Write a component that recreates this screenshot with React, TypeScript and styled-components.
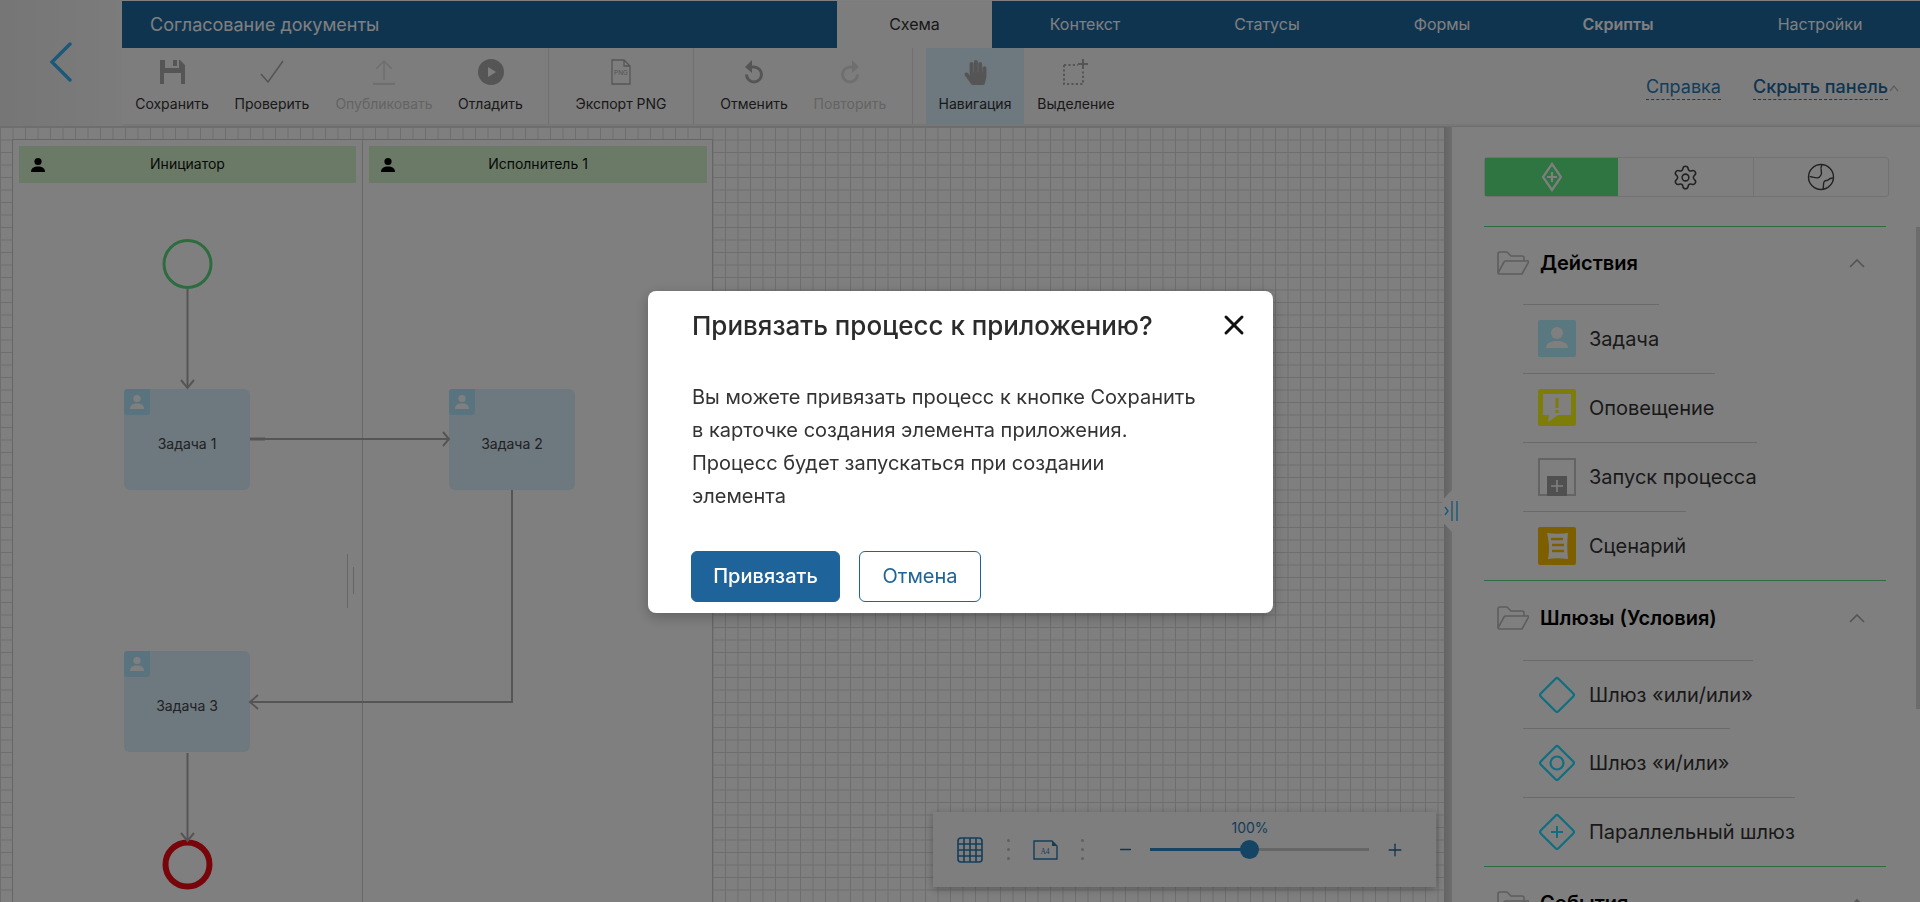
import React from 'react';
import styled, { createGlobalStyle } from 'styled-components';
import { FaHandPaper } from 'react-icons/fa';
import { Settings, X, Plus, Minus } from 'lucide-react';

const Global = createGlobalStyle`
  html, body { margin: 0; padding: 0; height: 100%; overflow: hidden; background: #fff; }
  body { font-family: Inter, "Noto Sans", sans-serif; color: #333; }
  #root { height: 100%; }
  * { box-sizing: border-box; }
`;

const Page = styled.div`
  height: 902px; width: 1920px; display: flex; flex-direction: column; overflow: hidden; position: relative; padding-top: 1px;
`;
const Top = styled.header`display: flex; height: 125px; flex: none;`;
const BackCell = styled.div`
  width: 122px; flex: none; display: flex; align-items: flex-start; justify-content: center; padding-top: 42px; margin-top: -1px;
  background: linear-gradient(90deg, #ececec 0%, #f8f8f8 100%);
`;
const TopMain = styled.div`flex: 1; display: flex; flex-direction: column; min-width: 0;`;
const TitleBar = styled.div`height: 47px; flex: none; display: flex; background: #1e68a0;`;
const ProcessTitle = styled.div`
  width: 715px; padding-left: 28px; line-height: 47px; font-size: 18px; color: #fff; flex: none; white-space: nowrap;
`;
const Tab = styled.div<{ $w: number; $active?: boolean; $bold?: boolean; $ml?: number }>`
  width: ${p => p.$w}px; margin-left: ${p => p.$ml ?? 0}px; flex: none; text-align: center; line-height: 47px; font-size: 16px;
  color: ${p => (p.$active ? '#333' : '#fff')}; background: ${p => (p.$active ? '#fafafa' : 'transparent')};
  font-weight: ${p => (p.$bold ? 600 : 400)};
`;
const Toolbar = styled.div`flex: 1; display: flex; background: #fbfbfb; border-bottom: 2px solid #eee;`;
const ToolGroup = styled.div<{ $pl?: number; $pr?: number; $sep?: boolean }>`
  display: flex; flex: none; padding-left: ${p => p.$pl ?? 0}px; padding-right: ${p => p.$pr ?? 0}px;
  border-right: ${p => (p.$sep ? '1px solid #e0e0e0' : 'none')};
`;
const ToolButton = styled.div<{ $w: number; $active?: boolean; $off?: boolean }>`
  width: ${p => p.$w}px; flex: none; display: flex; flex-direction: column; align-items: center; padding-top: 11px;
  background: ${p => (p.$active ? '#dcf0ff' : 'transparent')};
  color: ${p => (p.$off ? '#cfcfcf' : '#aaa')};
`;
const ToolIcon = styled.div`height: 26px; display: flex; align-items: center; justify-content: center;`;
const ToolLabel = styled.div<{ $off?: boolean }>`
  margin-top: 9px; font-size: 14px; line-height: 20px; white-space: nowrap; color: ${p => (p.$off ? '#c8c8c8' : '#333')};
`;
const Links = styled.div`margin-left: auto; display: flex; align-items: flex-start; gap: 32px; padding: 27px 32px 0 0;`;
const HelpLink = styled.span<{ $strong?: boolean }>`
  font-size: 18px; line-height: 23px; color: ${p => (p.$strong ? '#1e68a0' : '#2a7ab5')}; font-weight: ${p => (p.$strong ? 500 : 400)};
  border-bottom: 1px dashed #2a7ab5; white-space: nowrap; padding-bottom: 1px;
`;
const Caret = styled.span`display: inline-flex; width: 12px; margin-right: -12px; vertical-align: 1px; color: #bbb;`;

const Work = styled.main`flex: 1; display: flex; min-height: 0; border-top: 1px solid #ddd;`;
const Canvas = styled.section`
  width: 1444px; flex: none; position: relative; overflow: hidden; background-color: #fff;
  background-image: linear-gradient(#dcdcdc 1px, transparent 1px), linear-gradient(90deg, #dcdcdc 1px, transparent 1px);
  background-size: 12.5px 12.5px;
`;
const Lanes = styled.div`
  position: absolute; left: 12px; top: 12px; bottom: 0; width: 701px; display: flex; background: #fff;
  border: 1px solid #ccc; border-bottom: none;
`;
const LaneColumn = styled.div<{ $last?: boolean }>`
  width: 350px; flex: none; padding: 6px 6px 0 6px; border-right: ${p => (p.$last ? 'none' : '1px solid #d0d0d0')};
`;
const LaneHead = styled.div`
  height: 37px; background: #d6f4cc; position: relative; display: flex; align-items: center; justify-content: center;
  font-size: 14px; color: #111; padding-bottom: 2px;
`;
const LaneIcon = styled.span`position: absolute; left: 11px; top: 11px; display: flex;`;
const Diagram = styled.svg`position: absolute; left: 0; top: 0; pointer-events: none;`;
const TaskNode = styled.div<{ $x: number; $y: number }>`
  position: absolute; left: ${p => p.$x}px; top: ${p => p.$y}px; width: 126px; height: 101px; border-radius: 6px;
  background: #dcf0ff; display: flex; align-items: center; justify-content: center; padding-top: 7px; font-size: 14px; color: #444;
`;
const TaskBadge = styled.span`
  position: absolute; left: 0; top: 0; width: 26px; height: 26px; border-radius: 3px 0 3px 3px; background: #b4e8ff;
  display: flex; align-items: center; justify-content: center;
`;
const ZoomBar = styled.div`
  position: absolute; right: 8px; bottom: 15px; width: 503px; height: 75px; background: #fcfcfc;
  box-shadow: 0 2px 8px rgba(0,0,0,.3); display: flex; align-items: center; padding-left: 24px;
`;
const Dots = styled.span<{ $ml: number }>`
  margin-left: ${p => p.$ml}px; width: 4px; display: flex; flex-direction: column; gap: 6px; flex: none;
  i { width: 3px; height: 3px; border-radius: 50%; background: #c0c0c0; display: block; }
`;
const ZoomIcon = styled.span<{ $ml: number }>`margin-left: ${p => p.$ml}px; display: flex; flex: none; color: #2a7ab5;`;
const Slider = styled.div`margin-left: 16px; width: 219px; height: 3px; background: #ccc; position: relative; flex: none;`;
const SliderFill = styled.div`position: absolute; left: 0; top: 0; height: 3px; background: #2a88c8;`;
const Thumb = styled.span`
  position: absolute; left: 90px; top: -8px; width: 19px; height: 19px; border-radius: 50%; background: #2a88c8;
`;
const SliderValue = styled.span`position: absolute; left: 100px; top: -29px; transform: translateX(-50%); font-size: 14px; line-height: 18px; color: #2a7ab5;`;

const Gutter = styled.div`width: 8px; flex: none; background: linear-gradient(90deg, #c8c8c8, #dcdcdc); position: relative;`;
const Handle = styled.div`
  position: absolute; left: -2px; top: 363px; width: 20px; height: 42px; background: #fff; z-index: 2; display: flex; align-items: center; justify-content: center;
  clip-path: polygon(0 25%, 50% 0, 100% 0, 100% 100%, 50% 100%, 0 75%);
`;
const Panel = styled.aside`flex: 1; background: #fff; padding: 30px 0 0 32px; position: relative; overflow: hidden;`;
const PanelTabs = styled.div`
  width: 405px; height: 40px; display: flex; border: 1px solid #e4e4e4; border-radius: 3px;
`;
const PanelTab = styled.div<{ $active?: boolean; $w: number }>`
  width: ${p => p.$w}px; flex: none; display: flex; align-items: center; justify-content: center;
  background: ${p => (p.$active ? '#5cea84' : 'transparent')};
  border-right: ${p => (p.$active ? 'none' : '1px solid #e4e4e4')};
  &:last-child { border-right: none; flex: 1; }
`;
const Section = styled.section<{ $first?: boolean }>`width: 402px; border-top: 1px solid #5cd880; margin-top: ${p => (p.$first ? 29 : 0)}px;`;
const SectionHead = styled.div<{ $h: number }>`height: ${p => p.$h}px; display: flex; align-items: center; padding: 0 0 5px 13px; position: relative;`;
const SectionTitle = styled.h3`margin: 0 0 0 11px; font-size: 20px; font-weight: 600; color: #000; line-height: 26px;`;
const Chevron = styled.span`margin-left: auto; margin-right: 21px; display: flex;`;
const Items = styled.div`display: flex; flex-direction: column; align-items: flex-start; margin-left: 39px;`;
const Item = styled.div<{ $h: number }>`
  height: ${p => p.$h}px; display: inline-flex; align-items: center; padding-left: 15px; gap: 13px;
  border-top: 1px solid #d4d4d4; font-size: 20px; color: #333; white-space: nowrap;
`;
const ItemIcon = styled.span`width: 38px; height: 38px; flex: none; display: block;`;
const ScrollThumb = styled.div`position: absolute; right: 0; top: 100px; width: 4px; height: 482px; background: #d8d8d8;`;

const Overlay = styled.div`
  position: fixed; inset: 0; background: rgba(0,0,0,.5); display: flex; align-items: center; justify-content: center; z-index: 10;
`;
const Dialog = styled.div`
  width: 625px; height: 322px; background: #fff; border-radius: 8px; position: relative; padding: 18px 44px 11px;
  box-shadow: 0 4px 14px rgba(0,0,0,.25); margin-left: 1px; margin-top: 1px;
`;
const DialogTitle = styled.h2`margin: 0; font-size: 26px; font-weight: 500; line-height: 34px; color: #2b2b2b; white-space: nowrap;`;
const CloseButton = styled.span`position: absolute; right: 23px; top: 18px; display: flex; color: #111;`;
const DialogText = styled.p`margin: 38px 0 0; font-size: 20px; line-height: 33px; color: #333; white-space: nowrap;`;
const DialogActions = styled.div`display: flex; gap: 19px; margin: 38px 0 0 -1px;`;
const Btn = styled.button<{ $primary?: boolean; $w: number }>`
  width: ${p => p.$w}px; height: 51px; border-radius: 6px; font: 500 20px Inter, sans-serif; padding: 0;
  border: 1px solid #1e6399; background: ${p => (p.$primary ? '#1e6399' : '#fff')}; color: ${p => (p.$primary ? '#fff' : '#1e6399')};
  font-weight: ${p => (p.$primary ? 500 : 400)};
`;

const I = { dark: '#aaa', off: '#dedede' };

const SaveIco = () => (
  <svg width="27" height="26" viewBox="0 0 27 26"><path fill={I.dark} fillRule="evenodd" d="M1 1h5v8h14V1h1l5 5v19h-4V14H5v11H1zM14 1h4v6h-4z" /></svg>
);
const CheckIco = () => (
  <svg width="24" height="24" viewBox="0 0 24 24"><path fill="none" stroke={I.dark} strokeWidth="1.6" d="M1 14l7 8L23 1" /></svg>
);
const UploadIco = () => (
  <svg width="22" height="26" viewBox="0 0 22 26"><path fill="none" stroke={I.off} strokeWidth="1.6" d="M11 21V2M3 10l8-8 8 8" /><path stroke={I.off} strokeWidth="2.4" d="M0 25h22" /></svg>
);
const PlayIco = () => (
  <svg width="26" height="26" viewBox="0 0 26 26"><circle cx="13" cy="13" r="13" fill={I.dark} /><path d="M10 8l8 5-8 5z" fill="#fff" /></svg>
);
const PngIco = () => (
  <svg width="20" height="26" viewBox="0 0 20 26">
    <path fill="none" stroke={I.dark} strokeWidth="1.3" d="M1 1h12l6 6v18H1zM13 1v6h6" />
    <text x="10" y="16" fontSize="6.5" textAnchor="middle" fontFamily="Inter" fill={I.dark}>PNG</text>
  </svg>
);
const UndoIco = ({ c, flip }: { c: string; flip?: boolean }) => (
  <svg width="20" height="24" viewBox="0 0 20 24" style={flip ? { transform: 'scaleX(-1)' } : undefined}>
    <path fill="none" stroke={c} strokeWidth="3" d="M6 7h4a7.5 7.5 0 1 1-7.5 7.5" />
    <path fill={c} d="M8 0v13L1 7z" />
  </svg>
);
const SelectIco = () => (
  <svg width="26" height="26" viewBox="0 0 26 26">
    <path fill="none" stroke={I.dark} strokeWidth="2" strokeDasharray="2.2 2.2" d="M1 6h14M1 6v19h19V11" />
    <path stroke={I.dark} strokeWidth="2" d="M20 0v10M15 5h10" />
  </svg>
);
const Person = ({ c, s = 16 }: { c: string; s?: number }) => (
  <svg width={s} height={s} viewBox="0 0 16 16"><circle cx="8" cy="4.5" r="3.6" fill={c} /><path fill={c} d="M1 15c0-4 3-5.5 7-5.5s7 1.5 7 5.5z" /></svg>
);
const Folder = () => (
  <svg width="32" height="24" viewBox="0 0 32 24">
    <path fill="none" stroke="#bbb" strokeWidth="1.6" strokeLinejoin="round" d="M1 22V3a2 2 0 0 1 2-2h7l4 4h11a2 2 0 0 1 2 2v3M1 22a1.6 1.6 0 0 0 1.6 1H25l6-11a1 1 0 0 0-1-2H9a2 2 0 0 0-2 1z" />
  </svg>
);
const Up = () => (
  <svg width="16" height="10" viewBox="0 0 16 10"><path fill="none" stroke="#aaa" strokeWidth="1.6" d="M1 9l7-7 7 7" /></svg>
);
const GateDiamond = ({ inner }: { inner?: React.ReactNode }) => (
  <svg width="38" height="38" viewBox="0 0 38 38">
    <rect x="6.5" y="6.5" width="25" height="25" rx="2" transform="rotate(45 19 19)" fill="none" stroke="#1edcff" strokeWidth="2.2" />
    {inner}
  </svg>
);

const tools1 = [
  { w: 100, label: 'Сохранить', icon: <SaveIco /> },
  { w: 100, label: 'Проверить', icon: <CheckIco /> },
  { w: 124, label: 'Опубликовать', icon: <UploadIco />, off: true },
  { w: 89, label: 'Отладить', icon: <PlayIco /> },
];

export default function App() {
  return (
    <>
      <Global />
      <Page>
        <Top>
          <BackCell>
            <svg width="24" height="40" viewBox="0 0 24 40"><path fill="none" stroke="#38b0f0" strokeWidth="3.4" strokeLinecap="round" d="M21 2L3 20l18 18" /></svg>
          </BackCell>
          <TopMain>
            <TitleBar>
              <ProcessTitle>Согласование документы</ProcessTitle>
              <Tab $w={155} $active>Схема</Tab>
              <Tab $w={186}>Контекст</Tab>
              <Tab $w={178}>Статусы</Tab>
              <Tab $w={172}>Формы</Tab>
              <Tab $w={180} $bold>Скрипты</Tab>
              <Tab $w={200} $ml={12}>Настройки</Tab>
            </TitleBar>
            <Toolbar>
              <ToolGroup $pr={13} $sep>
                {tools1.map(t => (
                  <ToolButton key={t.label} $w={t.w} $off={t.off}>
                    <ToolIcon>{t.icon}</ToolIcon>
                    <ToolLabel $off={t.off}>{t.label}</ToolLabel>
                  </ToolButton>
                ))}
              </ToolGroup>
              <ToolGroup $sep>
                <ToolButton $w={144}><ToolIcon><PngIco /></ToolIcon><ToolLabel>Экспорт PNG</ToolLabel></ToolButton>
              </ToolGroup>
              <ToolGroup $pr={26} $sep>
                <ToolButton $w={120}><ToolIcon><UndoIco c={I.dark} /></ToolIcon><ToolLabel>Отменить</ToolLabel></ToolButton>
                <ToolButton $w={72} $off><ToolIcon><UndoIco c={I.off} flip /></ToolIcon><ToolLabel $off>Повторить</ToolLabel></ToolButton>
              </ToolGroup>
              <ToolGroup $pl={13}>
                <ToolButton $w={98} $active><ToolIcon><FaHandPaper size={25} color={I.dark} /></ToolIcon><ToolLabel>Навигация</ToolLabel></ToolButton>
                <ToolButton $w={104}><ToolIcon><SelectIco /></ToolIcon><ToolLabel>Выделение</ToolLabel></ToolButton>
              </ToolGroup>
              <Links>
                <HelpLink>Справка</HelpLink>
                <HelpLink $strong>
                  Скрыть панель
                  <Caret><svg width="12" height="8" viewBox="0 0 12 8"><path fill="none" stroke="currentColor" strokeWidth="1.3" d="M2 7l4-5 4 5" /></svg></Caret>
                </HelpLink>
              </Links>
            </Toolbar>
          </TopMain>
        </Top>
        <Work>
          <Canvas>
            <Lanes>
              <LaneColumn>
                <LaneHead><LaneIcon><Person c="#000" /></LaneIcon>Инициатор</LaneHead>
              </LaneColumn>
              <LaneColumn $last>
                <LaneHead><LaneIcon><Person c="#000" /></LaneIcon>Исполнитель 1</LaneHead>
              </LaneColumn>
            </Lanes>
            <TaskNode $x={124} $y={262}><TaskBadge><Person c="#fff" /></TaskBadge>Задача 1</TaskNode>
            <TaskNode $x={449} $y={262}><TaskBadge><Person c="#fff" /></TaskBadge>Задача 2</TaskNode>
            <TaskNode $x={124} $y={524}><TaskBadge><Person c="#fff" /></TaskBadge>Задача 3</TaskNode>
            <Diagram width="1444" height="776" viewBox="0 126 1444 776">
              <circle cx="187.5" cy="263" r="23.5" fill="#fff" stroke="#5cd880" strokeWidth="3" />
              <circle cx="187.5" cy="863.5" r="22" fill="#fff" stroke="#f00a14" strokeWidth="6" />
              <g fill="none" stroke="#aaa" strokeWidth="2">
                <path d="M187.5 288V387M181 379l6.5 8 6.5-8" />
                <path d="M250 438H449M443 431l6 7-6 7" />
                <path d="M250 438h15" strokeWidth="3" />
                <path d="M512 489V701H250M258 694l-8 7 8 7" />
                <path d="M187.5 752V839M181 832l6.5 8 6.5-8" />
              </g>
              <path stroke="#ccc" strokeWidth="1" d="M347.5 553v54M353.5 566v27" />
            </Diagram>
            <ZoomBar>
              <ZoomIcon $ml={0}>
                <svg width="26" height="26" viewBox="0 0 26 26"><g fill="none" stroke="currentColor" strokeWidth="1.6"><rect x="1" y="1" width="24" height="24" rx="3" /><path d="M7 1v24M13 1v24M19 1v24M1 7h24M1 13h24M1 19h24" /></g></svg>
              </ZoomIcon>
              <Dots $ml={24}><i /><i /><i /></Dots>
              <ZoomIcon $ml={22}>
                <svg width="25" height="20" viewBox="0 0 25 20"><path fill="none" stroke="currentColor" strokeWidth="1.4" d="M1 1h18l5 5v13H1z" /><path fill="currentColor" d="M19 1l5 5h-5z" /><text x="12" y="14" fontSize="7.5" textAnchor="middle" fontFamily="Liberation Serif" fill="currentColor">A4</text></svg>
              </ZoomIcon>
              <Dots $ml={23}><i /><i /><i /></Dots>
              <ZoomIcon $ml={32}><Minus size={17} strokeWidth={1.8} color="#1e68a0" /></ZoomIcon>
              <Slider>
                <SliderFill style={{ width: '100px' }} />
                <Thumb />
                <SliderValue>100%</SliderValue>
              </Slider>
              <ZoomIcon $ml={16}><Plus size={20} strokeWidth={1.6} color="#1e68a0" /></ZoomIcon>
            </ZoomBar>
          </Canvas>
          <Gutter>
            <Handle>
              <svg width="16" height="22" viewBox="0 0 16 22"><g fill="none" stroke="#38b0f0" strokeWidth="1.4"><path d="M1 7l3 4-3 4" /><path d="M8 1v20M13 1v20" /></g></svg>
            </Handle>
          </Gutter>
          <Panel>
            <PanelTabs>
              <PanelTab $w={133} $active>
                <svg width="30" height="30" viewBox="0 0 30 30"><g fill="none" stroke="#fff" strokeWidth="2.2"><path d="M15 2l9 13-9 13-9-13z" /><path d="M15 10v10M10 15h10" /></g></svg>
              </PanelTab>
              <PanelTab $w={136}><Settings size={27} strokeWidth={1.4} color="#444" /></PanelTab>
              <PanelTab $w={134}>
                <svg width="28" height="28" viewBox="0 0 28 28"><g fill="none" stroke="#444" strokeWidth="1.4"><circle cx="14" cy="14" r="12.5" /><path d="M15 2c-3 4 1 6-1 10s-5 3-9 2-3-.5-3-.5M26 15c-3 0-4 1-5 2s-3 0-4 2 0 3-1 7" /></g></svg>
              </PanelTab>
            </PanelTabs>
            <Section $first>
              <SectionHead $h={77}><Folder /><SectionTitle>Действия</SectionTitle><Chevron><Up /></Chevron></SectionHead>
              <Items>
                <Item $h={69}>
                  <ItemIcon><svg width="38" height="38" viewBox="0 0 38 38"><rect width="38" height="37" rx="2" fill="#b4f0ff" /><circle cx="19" cy="13" r="6" fill="#fff" /><path fill="#fff" d="M8 28c0-5 5-7 11-7s11 2 11 7z" /></svg></ItemIcon>
                  Задача
                </Item>
                <Item $h={69}>
                  <ItemIcon><svg width="38" height="38" viewBox="0 0 38 38"><rect width="38" height="37" rx="2" fill="#fafa14" /><path fill="#fff" d="M5 5h28v21H20l-10 7 1-7H5z" /><path stroke="#fafa14" strokeWidth="3" d="M19 9v10M19 21v3" /></svg></ItemIcon>
                  Оповещение
                </Item>
                <Item $h={69}>
                  <ItemIcon><svg width="38" height="38" viewBox="0 0 38 38"><rect x="1" y="1" width="36" height="36" fill="#fff" stroke="#c8c8c8" strokeWidth="2" /><rect x="9" y="18" width="20" height="20" fill="#a0a0a0" /><path stroke="#fff" strokeWidth="1.6" d="M19 22v12M13 28h12" /></svg></ItemIcon>
                  Запуск процесса
                </Item>
                <Item $h={69}>
                  <ItemIcon><svg width="38" height="38" viewBox="0 0 38 38"><rect width="38" height="38" rx="2" fill="#fabe00" /><path fill="#fff" d="M9 6c7 1 14 1 21 0-1 8-1 18 0 26-7-1-14-1-20 0 2-9 1-18-1-26z" /><path stroke="#fabe00" strokeWidth="2.4" d="M13 12h12M14 18h12M14 24h12" /></svg></ItemIcon>
                  Сценарий
                </Item>
              </Items>
            </Section>
            <Section>
              <SectionHead $h={79}><Folder /><SectionTitle>Шлюзы (Условия)</SectionTitle><Chevron><Up /></Chevron></SectionHead>
              <Items>
                <Item $h={68}><ItemIcon><GateDiamond /></ItemIcon>Шлюз «или/или»</Item>
                <Item $h={69}><ItemIcon><GateDiamond inner={<circle cx="19" cy="19" r="6.5" fill="none" stroke="#1edcff" strokeWidth="2.2" />} /></ItemIcon>Шлюз «и/или»</Item>
                <Item $h={69}><ItemIcon><GateDiamond inner={<path stroke="#1edcff" strokeWidth="2" d="M19 13v12M13 19h12" />} /></ItemIcon>Параллельный шлюз</Item>
              </Items>
            </Section>
            <Section>
              <SectionHead $h={77}><Folder /><SectionTitle>События</SectionTitle><Chevron><Up /></Chevron></SectionHead>
            </Section>
            <ScrollThumb />
          </Panel>
        </Work>
        <Overlay>
          <Dialog>
            <DialogTitle>Привязать процесс к приложению?</DialogTitle>
            <CloseButton><X size={32} strokeWidth={2.2} /></CloseButton>
            <DialogText>
              Вы можете привязать процесс к кнопке Сохранить<br />
              в карточке создания элемента приложения.<br />
              Процесс будет запускаться при создании<br />
              элемента
            </DialogText>
            <DialogActions>
              <Btn $primary $w={149}>Привязать</Btn>
              <Btn $w={122}>Отмена</Btn>
            </DialogActions>
          </Dialog>
        </Overlay>
      </Page>
    </>
  );
}
